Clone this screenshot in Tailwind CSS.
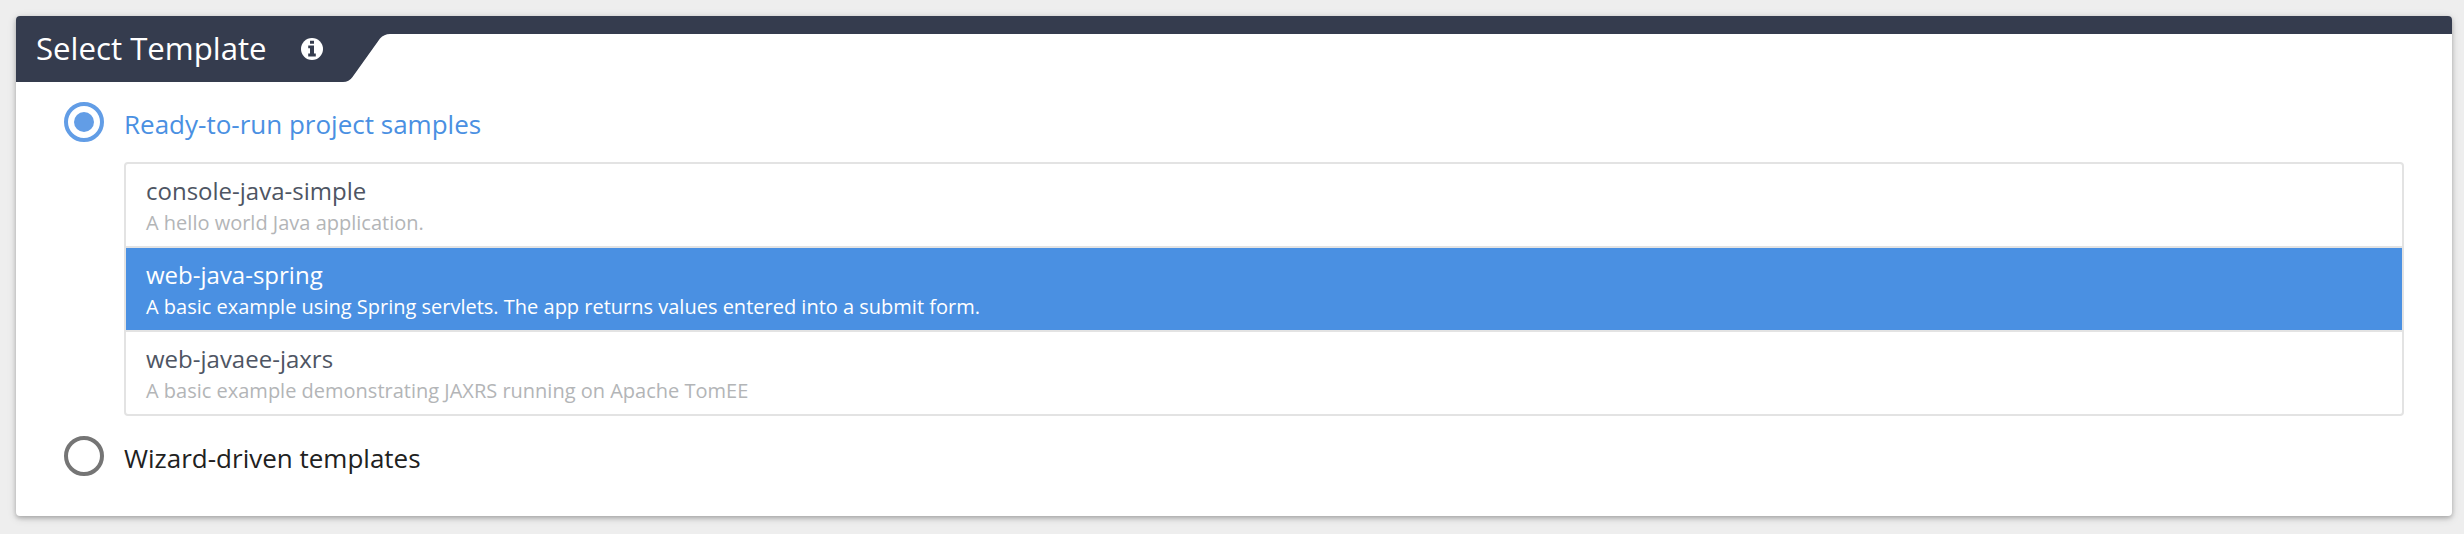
<!DOCTYPE html>
<html lang="en">
<head>
<meta charset="utf-8">
<title>Select Template</title>
<script src="https://cdn.jsdelivr.net/npm/@tailwindcss/browser@4"></script>
</head>
<body class="h-[534px] overflow-hidden bg-[#eeeeee] pt-4 pr-3 pb-[18px] pl-4 font-['Open_Sans','Noto_Sans',sans-serif]">
<section class="h-[500px] overflow-visible rounded bg-white shadow-[0_2px_4px_rgba(0,0,0,0.22),0_2px_10px_rgba(0,0,0,0.14)]">
  <header class="flex h-[66px] items-start overflow-hidden rounded-t">
    <div class="flex h-[66px] w-80 shrink-0 items-center bg-[#353c4e] pl-5">
      <h1 class="w-[265px] pb-0.5 text-[31.2px] leading-[64px] whitespace-nowrap text-white">Select Template</h1>
      <svg class="size-[22px]" viewBox="0 0 22 22" fill="none"><circle cx="11" cy="11" r="11" fill="#fff"/><path d="M9 2.800h4v3H9zM7.200 7.400H13v8.200h1.800v2.800H7.200v-2.800H9v-5.400H7.200z" fill="#353c4e"/></svg>
    </div>
    <svg class="h-[66px] w-[60px] shrink-0" viewBox="0 0 60 66"><path d="M0 0H60V18H54Q48 18 44 22.500L16.500 61Q13 66 7 66H0Z" fill="#353c4e"/></svg>
    <div class="h-[18px] flex-1 bg-[#353c4e]"></div>
  </header>
  <div class="pr-12 pl-12">
    <div class="flex h-20 items-start pt-5">
      <span class="flex size-10 items-center justify-center rounded-full border-4 border-[#629de6]"><span class="size-5 rounded-full bg-[#629de6]"></span></span>
      <span class="pt-0.5 pl-5 text-[26px] leading-10 text-[#4a90e2]">Ready-to-run project samples</span>
    </div>
    <ul class="ml-[60px] overflow-hidden rounded border-2 border-[#e3e3e3] text-[20px]">
      <li class="h-[84px] border-b-2 border-[#e3e3e3] pt-3 pl-5">
        <p class="text-[24px] leading-[30px] text-[#4e5563]">console-java-simple</p>
        <p class="mt-[3px] leading-7 text-[#b3b5b7]">A hello world Java application.</p>
      </li>
      <li class="h-[84px] border-b-2 border-[#e3e3e3] bg-[#4a90e2] pt-3 pl-5 text-white">
        <p class="text-[24px] leading-[30px]">web-java-spring</p>
        <p class="mt-[3px] leading-7">A basic example using Spring servlets. The app returns values entered into a submit form.</p>
      </li>
      <li class="h-[82px] pt-3 pl-5">
        <p class="text-[24px] leading-[30px] text-[#4e5563]">web-javaee-jaxrs</p>
        <p class="mt-[3px] leading-7 text-[#b3b5b7]">A basic example demonstrating JAXRS running on Apache TomEE</p>
      </li>
    </ul>
    <div class="flex items-start pt-5">
      <span class="size-10 rounded-full border-4 border-[#757575]"></span>
      <span class="pt-0.5 pl-5 text-[26px] leading-10 text-[#212121]">Wizard-driven templates</span>
    </div>
  </div>
</section>
</body>
</html>
